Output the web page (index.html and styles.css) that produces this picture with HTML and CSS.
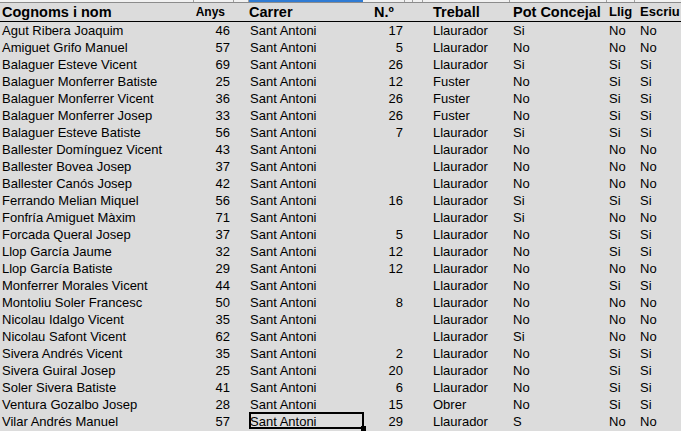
FILE: index.html
```html
<!DOCTYPE html>
<html lang="ca">
<head>
<meta charset="utf-8">
<title>Cognoms i nom</title>
<link rel="stylesheet" href="styles.css">
</head>
<body>
<div class="sheet">
  <div class="colbar">
    <span></span><span></span><span></span><span class="hl"></span><span></span><span></span><span></span><span></span><span></span><span></span><span class="last"></span>
  </div>
  <div class="row head">
    <div class="c-name">Cognoms i nom</div>
    <div class="c-anys">Anys</div>
    <div></div>
    <div class="c-carrer">Carrer</div>
    <div class="c-num">N.º</div>
    <div class="c-treball">Treball</div>
    <div class="c-pot">Pot Concejal</div>
    <div class="c-llig">Llig</div>
    <div class="c-escriu">Escriu</div>
  </div>
  <div class="row"><div class="c-name">Agut Ribera Joaquim</div><div class="c-anys">46</div><div></div><div class="c-carrer">Sant Antoni</div><div class="c-num">17</div><div class="c-treball">Llaurador</div><div class="c-pot">Si</div><div class="c-llig">No</div><div class="c-escriu">No</div></div>
  <div class="row"><div class="c-name">Amiguet Grifo Manuel</div><div class="c-anys">57</div><div></div><div class="c-carrer">Sant Antoni</div><div class="c-num">5</div><div class="c-treball">Llaurador</div><div class="c-pot">No</div><div class="c-llig">No</div><div class="c-escriu">No</div></div>
  <div class="row"><div class="c-name">Balaguer Esteve Vicent</div><div class="c-anys">69</div><div></div><div class="c-carrer">Sant Antoni</div><div class="c-num">26</div><div class="c-treball">Llaurador</div><div class="c-pot">Si</div><div class="c-llig">Si</div><div class="c-escriu">Si</div></div>
  <div class="row"><div class="c-name">Balaguer Monferrer Batiste</div><div class="c-anys">25</div><div></div><div class="c-carrer">Sant Antoni</div><div class="c-num">12</div><div class="c-treball">Fuster</div><div class="c-pot">No</div><div class="c-llig">Si</div><div class="c-escriu">Si</div></div>
  <div class="row"><div class="c-name">Balaguer Monferrer Vicent</div><div class="c-anys">36</div><div></div><div class="c-carrer">Sant Antoni</div><div class="c-num">26</div><div class="c-treball">Fuster</div><div class="c-pot">No</div><div class="c-llig">Si</div><div class="c-escriu">Si</div></div>
  <div class="row"><div class="c-name">Balaguer Monferrer Josep</div><div class="c-anys">33</div><div></div><div class="c-carrer">Sant Antoni</div><div class="c-num">26</div><div class="c-treball">Fuster</div><div class="c-pot">No</div><div class="c-llig">Si</div><div class="c-escriu">Si</div></div>
  <div class="row"><div class="c-name">Balaguer Esteve Batiste</div><div class="c-anys">56</div><div></div><div class="c-carrer">Sant Antoni</div><div class="c-num">7</div><div class="c-treball">Llaurador</div><div class="c-pot">Si</div><div class="c-llig">Si</div><div class="c-escriu">Si</div></div>
  <div class="row"><div class="c-name">Ballester Domínguez Vicent</div><div class="c-anys">43</div><div></div><div class="c-carrer">Sant Antoni</div><div class="c-num"></div><div class="c-treball">Llaurador</div><div class="c-pot">No</div><div class="c-llig">No</div><div class="c-escriu">No</div></div>
  <div class="row"><div class="c-name">Ballester Bovea Josep</div><div class="c-anys">37</div><div></div><div class="c-carrer">Sant Antoni</div><div class="c-num"></div><div class="c-treball">Llaurador</div><div class="c-pot">No</div><div class="c-llig">No</div><div class="c-escriu">No</div></div>
  <div class="row"><div class="c-name">Ballester Canós Josep</div><div class="c-anys">42</div><div></div><div class="c-carrer">Sant Antoni</div><div class="c-num"></div><div class="c-treball">Llaurador</div><div class="c-pot">No</div><div class="c-llig">No</div><div class="c-escriu">No</div></div>
  <div class="row"><div class="c-name">Ferrando Melian Miquel</div><div class="c-anys">56</div><div></div><div class="c-carrer">Sant Antoni</div><div class="c-num">16</div><div class="c-treball">Llaurador</div><div class="c-pot">Si</div><div class="c-llig">Si</div><div class="c-escriu">Si</div></div>
  <div class="row"><div class="c-name">Fonfría Amiguet Màxim</div><div class="c-anys">71</div><div></div><div class="c-carrer">Sant Antoni</div><div class="c-num"></div><div class="c-treball">Llaurador</div><div class="c-pot">Si</div><div class="c-llig">No</div><div class="c-escriu">No</div></div>
  <div class="row"><div class="c-name">Forcada Queral Josep</div><div class="c-anys">37</div><div></div><div class="c-carrer">Sant Antoni</div><div class="c-num">5</div><div class="c-treball">Llaurador</div><div class="c-pot">No</div><div class="c-llig">Si</div><div class="c-escriu">Si</div></div>
  <div class="row"><div class="c-name">Llop García Jaume</div><div class="c-anys">32</div><div></div><div class="c-carrer">Sant Antoni</div><div class="c-num">12</div><div class="c-treball">Llaurador</div><div class="c-pot">No</div><div class="c-llig">Si</div><div class="c-escriu">Si</div></div>
  <div class="row"><div class="c-name">Llop García Batiste</div><div class="c-anys">29</div><div></div><div class="c-carrer">Sant Antoni</div><div class="c-num">12</div><div class="c-treball">Llaurador</div><div class="c-pot">No</div><div class="c-llig">No</div><div class="c-escriu">No</div></div>
  <div class="row"><div class="c-name">Monferrer Morales Vicent</div><div class="c-anys">44</div><div></div><div class="c-carrer">Sant Antoni</div><div class="c-num"></div><div class="c-treball">Llaurador</div><div class="c-pot">No</div><div class="c-llig">Si</div><div class="c-escriu">Si</div></div>
  <div class="row"><div class="c-name">Montoliu Soler Francesc</div><div class="c-anys">50</div><div></div><div class="c-carrer">Sant Antoni</div><div class="c-num">8</div><div class="c-treball">Llaurador</div><div class="c-pot">No</div><div class="c-llig">No</div><div class="c-escriu">No</div></div>
  <div class="row"><div class="c-name">Nicolau Idalgo Vicent</div><div class="c-anys">35</div><div></div><div class="c-carrer">Sant Antoni</div><div class="c-num"></div><div class="c-treball">Llaurador</div><div class="c-pot">No</div><div class="c-llig">No</div><div class="c-escriu">No</div></div>
  <div class="row"><div class="c-name">Nicolau Safont Vicent</div><div class="c-anys">62</div><div></div><div class="c-carrer">Sant Antoni</div><div class="c-num"></div><div class="c-treball">Llaurador</div><div class="c-pot">Si</div><div class="c-llig">No</div><div class="c-escriu">No</div></div>
  <div class="row"><div class="c-name">Sivera Andrés Vicent</div><div class="c-anys">35</div><div></div><div class="c-carrer">Sant Antoni</div><div class="c-num">2</div><div class="c-treball">Llaurador</div><div class="c-pot">No</div><div class="c-llig">Si</div><div class="c-escriu">Si</div></div>
  <div class="row"><div class="c-name">Sivera Guiral Josep</div><div class="c-anys">25</div><div></div><div class="c-carrer">Sant Antoni</div><div class="c-num">20</div><div class="c-treball">Llaurador</div><div class="c-pot">No</div><div class="c-llig">Si</div><div class="c-escriu">Si</div></div>
  <div class="row"><div class="c-name">Soler Sivera Batiste</div><div class="c-anys">41</div><div></div><div class="c-carrer">Sant Antoni</div><div class="c-num">6</div><div class="c-treball">Llaurador</div><div class="c-pot">No</div><div class="c-llig">Si</div><div class="c-escriu">Si</div></div>
  <div class="row"><div class="c-name">Ventura Gozalbo Josep</div><div class="c-anys">28</div><div></div><div class="c-carrer">Sant Antoni</div><div class="c-num">15</div><div class="c-treball">Obrer</div><div class="c-pot">No</div><div class="c-llig">Si</div><div class="c-escriu">Si</div></div>
  <div class="row"><div class="c-name">Vilar Andrés Manuel</div><div class="c-anys">57</div><div></div><div class="c-carrer selected">Sant Antoni</div><div class="c-num">29</div><div class="c-treball">Llaurador</div><div class="c-pot">S</div><div class="c-llig">No</div><div class="c-escriu">No</div></div>
</div>
</body>
</html>
```

FILE: styles.css
```css
html, body {
  margin: 0;
  padding: 0;
}
body {
  background: #dcdcdc;
  color: #000;
  font-family: "Liberation Sans", Arial, sans-serif;
  font-size: 13px;
  width: 681px;
  height: 431px;
  overflow: hidden;
}
.sheet {
  width: 681px;
}
.colbar {
  display: grid;
  grid-template-columns: 194px 40px 15px 114px 42px 8px 10px 87px 97px 28px 1fr;
  height: 2px;
  background: #f2f2f2;
  border-bottom: 1px solid #8c8c8c;
}
.colbar span {
  border-right: 1px solid #a0a0a0;
}
.colbar .hl {
  background: #2f7bd4;
  border-right: 0;
}
.colbar .last {
  border-right: 0;
}
.row {
  display: grid;
  grid-template-columns: 194px 40px 15px 114px 42px 105px 97px 28px 1fr;
  height: 17px;
  line-height: 17px;
  white-space: nowrap;
}
.head {
  height: 18px;
  line-height: 18px;
  font-weight: bold;
  font-size: 14.5px;
  border-bottom: 1px solid #000;
}
.c-name { padding-left: 2px; }
.c-anys { text-align: right; padding-right: 4px; }
.c-carrer { padding-left: 1px; }
.c-num { text-align: right; padding-right: 2px; }
.c-treball { padding-left: 28px; }
.c-pot { padding-left: 3px; }
.c-llig { padding-left: 2px; }
.c-escriu { padding-left: 5px; }

.head .c-anys { font-size: 12px; padding-right: 9px; }
.head .c-carrer { padding-left: 0; }
.head .c-num { text-align: center; padding-right: 0; }
.head .c-llig,
.head .c-escriu { font-size: 13px; }

.selected {
  position: relative;
}
.selected::before {
  content: "";
  position: absolute;
  left: 0;
  top: -1px;
  right: -1px;
  bottom: 1px;
  border: 2px solid #000;
}
.selected::after {
  content: "";
  position: absolute;
  right: -3px;
  bottom: -1px;
  width: 5px;
  height: 5px;
  background: #000;
}
```
